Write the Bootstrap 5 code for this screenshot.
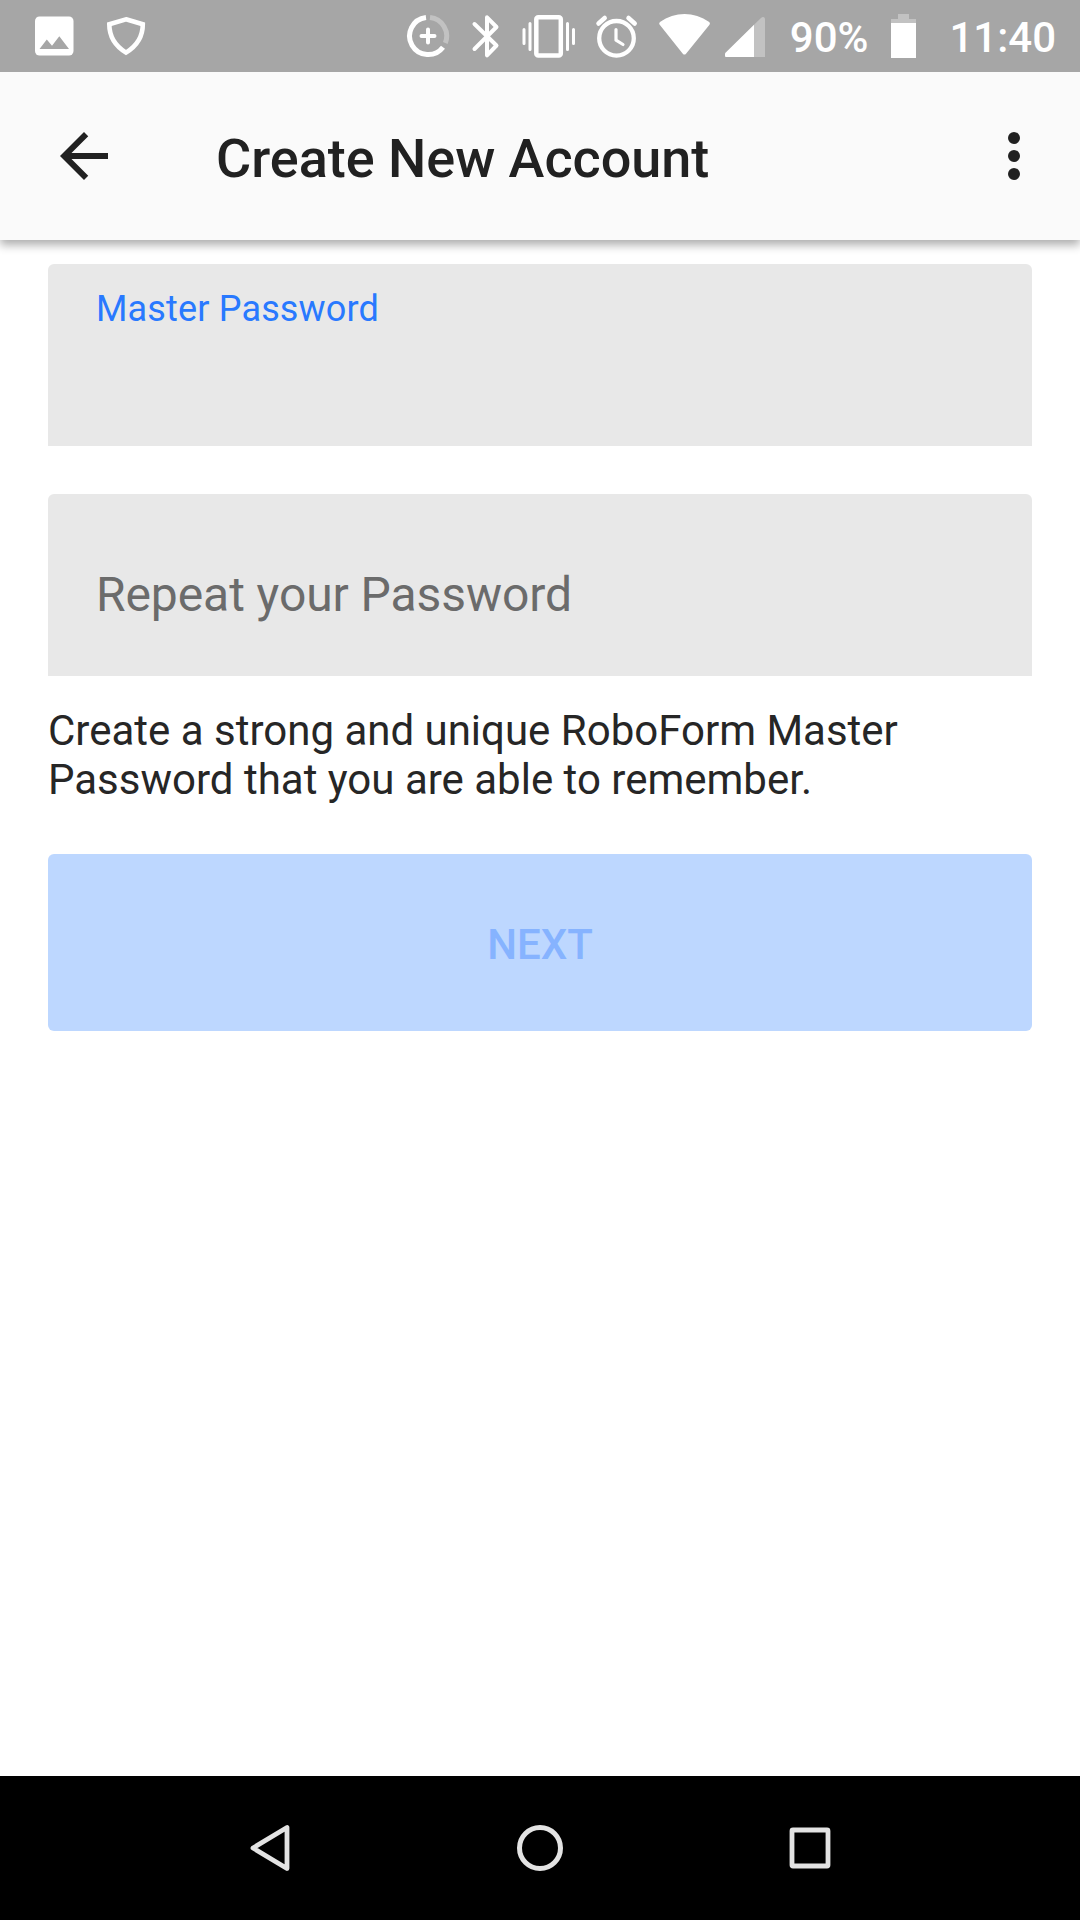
<!DOCTYPE html>
<html lang="en">
<head>
<meta charset="utf-8">
<meta name="viewport" content="width=device-width, initial-scale=1">
<title>Create New Account</title>
<link rel="stylesheet" href="https://cdn.jsdelivr.net/npm/bootstrap@5.3.0/dist/css/bootstrap.min.css">
<style>
body{font-family:Roboto,"Noto Sans",sans-serif;color:#212121;background:#fff;height:1920px;overflow:hidden}
svg{display:block;flex:none}
.status-bar{height:72px;background:#a6a6a6;color:#fff;font-size:42px;font-weight:500;line-height:72px;padding-left:34px;padding-right:24px}
.status-bar{position:relative;z-index:2}
.status-bar span{white-space:nowrap;padding-top:2px}
.icon-shield{margin-left:32px}
.icon-bluetooth{margin-left:21px}
.icon-vibrate{margin-left:20px}
.icon-alarm{margin-left:18px}
.icon-wifi{margin-left:19px}
.icon-signal{margin-left:12px}
.battery-level{margin-left:24px}
.icon-battery{margin:0 32px 0 22px}
.app-bar{height:168px;background:#fafafa;padding:0 30px 0 48px;box-shadow:0 5px 9px rgba(0,0,0,.32);z-index:1}
.app-title{font-size:54px;font-weight:500;line-height:64px;margin:6px 0 0 96px;letter-spacing:-.03px}
.icon-btn{border:0;background:none;padding:0;color:#212121}
.page-body{padding:24px 48px 0}
.field-box{height:182px;background:#e8e8e8;border-radius:6px 6px 0 0;padding:0 48px;margin-bottom:48px}
.field-box label{font-size:36px;line-height:42px;color:#2979ff;margin-top:24px;letter-spacing:.16px}
.field-box .form-control{border:0;background:none;box-shadow:none;padding:0;font-size:48px;line-height:56px;height:56px;color:#212121;border-radius:0}
.field-box .form-control::placeholder{color:#6b6b6b;opacity:1;letter-spacing:-.08px}
.field-last{margin-bottom:0;padding-top:73px}
.hint{font-size:42px;line-height:49px;margin:30px 0 50px;color:#262626}
.btn.next-btn,.btn.next-btn:disabled{height:177px;background:#bdd7ff;color:#86b3ff;border:0;border-radius:6px;opacity:1;font-size:42px;font-weight:500;line-height:50px;padding:5px 0 0}
.nav-keys{height:144px;background:#000;padding:0 249px}
</style>
<script src="https://cdn.jsdelivr.net/npm/bootstrap@5.3.0/dist/js/bootstrap.bundle.min.js"></script>
</head>
<body class="d-flex flex-column">
<header class="status-bar d-flex justify-content-between flex-shrink-0">
  <div class="d-flex">
    <svg width="40" height="72" viewBox="34 0 40 72"><rect x="35" y="16.5" width="38.5" height="39" rx="4.5" fill="#fff"/><path d="M39.5 49 46.8 39.5 52 45.8 59.3 36.3 69 49z" fill="#a6a6a6"/></svg>
    <svg class="icon-shield" width="40" height="72" viewBox="106 0 40 72"><path d="M126 19.3 142.8 24.3C142.8 37 136 46.5 126 52.6 116 46.5 109.3 37 109.3 24.3z" fill="none" stroke="#fff" stroke-width="4.6"/></svg>
  </div>
  <div class="d-flex">
    <svg width="44" height="72" viewBox="406 0 44 72" fill="none" stroke="#fff" stroke-width="5"><path d="M426 17.5A18.6 18.6 0 1 0 443 47.2"/><path d="M430 17.5A18.6 18.6 0 0 1 445.3 43" stroke="#c2c2c2"/><path d="M428 29.5v13M421.5 36h13" stroke-width="4" stroke-linecap="round"/></svg>
    <svg class="icon-bluetooth" width="30" height="72" viewBox="471 0 30 72" fill="none" stroke="#fff" stroke-width="4" stroke-linecap="round" stroke-linejoin="round"><path d="M474.5 24 496.5 45.5 487 55.3V17.3L496.5 27 474.5 49"/></svg>
    <svg class="icon-vibrate" width="56" height="72" viewBox="521 0 56 72" fill="none" stroke="#fff" stroke-linecap="round"><rect x="536.3" y="17.3" width="24.5" height="38.2" rx="2" stroke-width="4.5"/><path d="M530 23.5v26M567.5 23.5v26M524 29.5v14M573.5 29.5v14" stroke-width="3"/></svg>
    <svg class="icon-alarm" width="44" height="72" viewBox="595 0 44 72" fill="none" stroke="#fff" stroke-linecap="round"><circle cx="616.5" cy="38.3" r="17.3" stroke-width="4.3"/><path d="M598.5 23.5 604.7 18M634.7 23.5 628.5 18" stroke-width="4.5"/><path d="M616 29.5v10.7L623 44.5" stroke-width="3.2" stroke-linejoin="round"/></svg>
    <svg class="icon-wifi" width="54" height="72" viewBox="658 0 54 72"><path d="M659.5 24.5Q658.6 23 660 22C675 11.2 694 11.2 709.2 22Q710.6 23 709.5 24.7L686 53.7Q684.4 55.5 682.8 53.7z" fill="#fff"/></svg>
    <svg class="icon-signal" width="42" height="72" viewBox="724 0 42 72"><path d="M754 24.8 761 18Q762.5 16.6 764 17.3 765 17.8 765 19.5V57H754z" fill="#c2c2c2"/><path d="M754 24.8V57H726Q725 57 725 56V54Q725 53 726 52.2z" fill="#fff"/></svg>
    <span class="battery-level">90%</span>
    <svg class="icon-battery" width="27" height="72" viewBox="891 0 27 72"><path d="M892 19h7v-5h11v5h7v4h-25z" fill="#c2c2c2"/><path d="M892 23h25v35h-25z" fill="#fff"/></svg>
    <span>11:40</span>
  </div>
</header>
<nav class="app-bar position-relative d-flex align-items-center flex-shrink-0">
  <button class="icon-btn" type="button" aria-label="Back"><svg width="72" height="72" viewBox="0 0 24 24" fill="currentColor"><path d="M20 11H7.83l5.59-5.59L12 4l-8 8 8 8 1.41-1.41L7.83 13H20v-2z"/></svg></button>
  <h1 class="app-title">Create New Account</h1>
  <button class="icon-btn ms-auto" type="button" aria-label="More"><svg width="72" height="72" viewBox="0 0 24 24" fill="currentColor"><circle cx="12" cy="6" r="2"/><circle cx="12" cy="12" r="2"/><circle cx="12" cy="18" r="2"/></svg></button>
</nav>
<main class="page-body flex-grow-1">
  <div class="field-box d-flex flex-column"><label for="master">Master Password</label><input id="master" class="form-control" type="password"></div>
  <div class="field-box field-last"><input class="form-control" type="password" placeholder="Repeat your Password" aria-label="Repeat your Password"></div>
  <p class="hint">Create a strong and unique RoboForm Master Password that you are able to remember.</p>
  <button class="btn next-btn w-100" type="button" disabled>NEXT</button>
</main>
<footer class="nav-keys d-flex justify-content-between align-items-center flex-shrink-0">
  <svg width="42" height="48" viewBox="249 1824 42 48" fill="none" stroke="#e3e3e3" stroke-width="4.8" stroke-linejoin="round"><path d="M287 1827.5v41L253 1848z"/></svg>
  <svg width="48" height="48" viewBox="516 1824 48 48" fill="none" stroke="#e3e3e3" stroke-width="5"><circle cx="540" cy="1848" r="20.5"/></svg>
  <svg width="42" height="42" viewBox="789 1827 42 42" fill="none" stroke="#e3e3e3" stroke-width="4.8"><rect x="792" y="1830" width="36" height="36" rx="1"/></svg>
</footer>
</body>
</html>
